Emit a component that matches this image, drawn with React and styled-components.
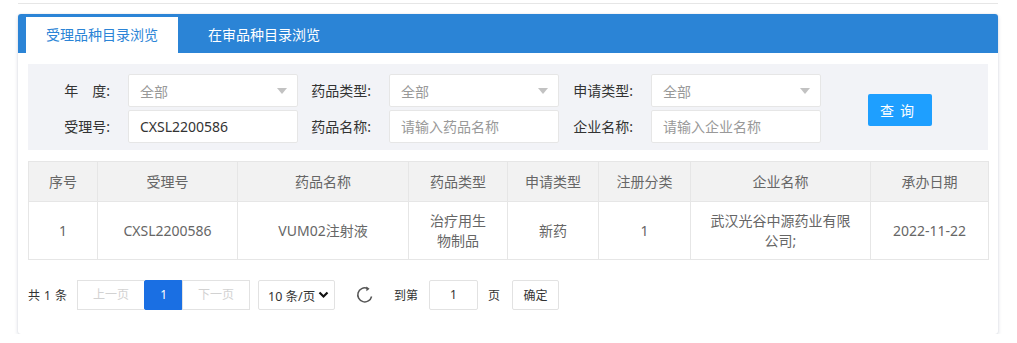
import React from 'react';
import styled, { createGlobalStyle } from 'styled-components';

const GlobalStyle = createGlobalStyle`
  * { box-sizing: border-box; }
  body {
    margin: 0;
    background: #fff;
    font-family: "Noto Sans", "Noto Sans CJK SC", sans-serif;
    font-size: 14px;
    color: #333;
  }
`;

const Page = styled.div`
  padding: 3px 19px 0 18px;
`;

const TopLine = styled.div`
  height: 1px;
  background: #e6e6e6;
`;

const Card = styled.div`
  height: 320px;
  margin-top: 10px;
  background: #fff;
  border-radius: 3px;
  box-shadow: 0 2px 4px rgba(30, 50, 90, 0.14), 0 0 2px rgba(30, 50, 90, 0.12);
  overflow: hidden;
`;

const TabBar = styled.div`
  display: flex;
  align-items: flex-end;
  gap: 10px;
  height: 39px;
  padding-left: 8px;
  background: #2b84d6;
`;

const Tab = styled.div`
  height: 36px;
  line-height: 36px;
  padding: 0 20px;
  font-size: 14px;
  color: ${p => (p.$active ? '#2b84d6' : '#fff')};
  background: ${p => (p.$active ? '#fff' : 'transparent')};
`;

const Body = styled.div`
  padding: 11px 10px 0;
`;

const Filter = styled.div`
  display: grid;
  grid-template-columns: 100px 170px 91px 170px 92px 170px 1fr;
  grid-template-rows: 33px 33px;
  row-gap: 3px;
  padding: 10px 0 7px;
  background: #f2f3f7;
`;

const Label = styled.div`
  text-align: right;
  padding-right: 18px;
  line-height: 33px;
  color: #333;
  white-space: nowrap;
`;

const Field = styled.div`
  display: flex;
  align-items: center;
  justify-content: space-between;
  height: 33px;
  padding: 0 10px 0 11px;
  background: #fff;
  border: 1px solid #e6e6e6;
  border-radius: 2px;
  color: ${p => (p.$muted ? '#999' : '#333')};
  font-size: 14px;
`;

const TextInput = styled.input`
  height: 33px;
  padding: 0 11px;
  background: #fff;
  border: 1px solid #e6e6e6;
  border-radius: 2px;
  font: inherit;
  font-size: 14px;
  color: #333;
  outline: none;
  &::placeholder { color: #999; }
`;

const Caret = styled.span`
  width: 0;
  height: 0;
  border-left: 5px solid transparent;
  border-right: 5px solid transparent;
  border-top: 6px solid #c2c2c2;
`;

const SearchButton = styled.button`
  grid-column: 7;
  grid-row: 1 / span 2;
  align-self: center;
  justify-self: start;
  margin: 3px 0 0 47px;
  width: 64px;
  height: 32px;
  border: none;
  border-radius: 2px;
  background: #1e9fff;
  color: #fff;
  font: inherit;
  font-size: 14px;
  letter-spacing: 6px;
  padding-left: 6px;
`;

const Table = styled.table`
  width: 960px;
  margin-top: 11px;
  border-collapse: collapse;
  table-layout: fixed;
  color: #666;

  th, td {
    border: 1px solid #e6e6e6;
    text-align: center;
    padding: 0 16px;
    font-size: 14px;
    line-height: 20px;
  }
  th {
    height: 40px;
    background: #f2f2f2;
    font-weight: normal;
  }
  td {
    height: 58px;
  }
`;

const Pager = styled.div`
  display: flex;
  align-items: center;
  height: 30px;
  margin-top: 20px;
  font-size: 12px;
  color: #333;
`;

const Count = styled.span`
  margin-right: 11px;
  word-spacing: 1px;
`;

const PageBtn = styled.span`
  height: 30px;
  line-height: 28px;
  padding: 0 15px;
  border: 1px solid ${p => (p.$current ? '#1a6fe3' : '#e2e2e2')};
  margin-left: -1px;
  background: ${p => (p.$current ? '#1a6fe3' : '#fff')};
  color: ${p => (p.$current ? '#fff' : '#d2d2d2')};
  border-radius: ${p => (p.$current ? '2px' : '0')};
`;

const Limit = styled.div`
  display: flex;
  align-items: center;
  justify-content: space-between;
  width: 77px;
  height: 30px;
  margin-left: 8px;
  padding: 0 5px 0 9px;
  border: 1px solid #e2e2e2;
  border-radius: 2px;
  color: #333;
  font-size: 12.5px;
`;

const Refresh = styled.span`
  display: flex;
  margin-left: 21px;
`;

const Text = styled.span`
  margin-left: ${p => p.$ml || 0}px;
`;

const JumpInput = styled.div`
  width: 49px;
  height: 30px;
  line-height: 28px;
  margin-left: 11px;
  border: 1px solid #e2e2e2;
  border-radius: 2px;
  text-align: center;
`;

const Confirm = styled.button`
  width: 47px;
  height: 30px;
  margin-left: 12px;
  border: 1px solid #e2e2e2;
  border-radius: 2px;
  background: #fff;
  font: inherit;
  font-size: 12px;
  color: #333;
  padding: 0;
`;

const Select = ({ children }) => (
  <Field $muted>
    <span>{children}</span>
    <Caret />
  </Field>
);

const columns = [
  ['序号', 69],
  ['受理号', 140],
  ['药品名称', 171],
  ['药品类型', 99],
  ['申请类型', 91],
  ['注册分类', 92],
  ['企业名称', 180],
  ['承办日期', 118],
];

const rows = [
  ['1', 'CXSL2200586', 'VUM02注射液', '治疗用生物制品', '新药', '1', '武汉光谷中源药业有限公司;', '2022-11-22'],
];

export default function App() {
  return (
    <Page>
      <GlobalStyle />
      <TopLine />
      <Card>
        <TabBar>
          <Tab $active>受理品种目录浏览</Tab>
          <Tab>在审品种目录浏览</Tab>
        </TabBar>
        <Body>
          <Filter>
            <Label>年　度:</Label>
            <Select>全部</Select>
            <Label>药品类型:</Label>
            <Select>全部</Select>
            <Label>申请类型:</Label>
            <Select>全部</Select>
            <SearchButton>查询</SearchButton>
            <Label>受理号:</Label>
            <TextInput defaultValue="CXSL2200586" />
            <Label>药品名称:</Label>
            <TextInput placeholder="请输入药品名称" />
            <Label>企业名称:</Label>
            <TextInput placeholder="请输入企业名称" />
          </Filter>

          <Table>
            <colgroup>
              {columns.map(([name, w]) => <col key={name} style={{ width: w }} />)}
            </colgroup>
            <thead>
              <tr>{columns.map(([name]) => <th key={name}>{name}</th>)}</tr>
            </thead>
            <tbody>
              {rows.map((r, i) => (
                <tr key={i}>{r.map((c, j) => <td key={j}>{c}</td>)}</tr>
              ))}
            </tbody>
          </Table>

          <Pager>
            <Count>共 1 条</Count>
            <PageBtn>上一页</PageBtn>
            <PageBtn $current>1</PageBtn>
            <PageBtn>下一页</PageBtn>
            <Limit>
              <span>10 条/页</span>
              <svg width="11" height="8" viewBox="0 0 11 8">
                <path d="M1.5 1.5 L5.5 5.5 L9.5 1.5" fill="none" stroke="#111" strokeWidth="2.2" />
              </svg>
            </Limit>
            <Refresh>
              <svg width="18" height="18" viewBox="0 0 18 18">
                <path d="M15.6 10.5 A7 7 0 1 1 11.2 2.3" fill="none" stroke="#555" strokeWidth="1.5" />
                <path d="M10.3 0.4 L13.6 2.8 L10.4 5.2 Z" fill="#555" />
              </svg>
            </Refresh>
            <Text $ml={20}>到第</Text>
            <JumpInput>1</JumpInput>
            <Text $ml={10}>页</Text>
            <Confirm>确定</Confirm>
          </Pager>
        </Body>
      </Card>
    </Page>
  );
}
